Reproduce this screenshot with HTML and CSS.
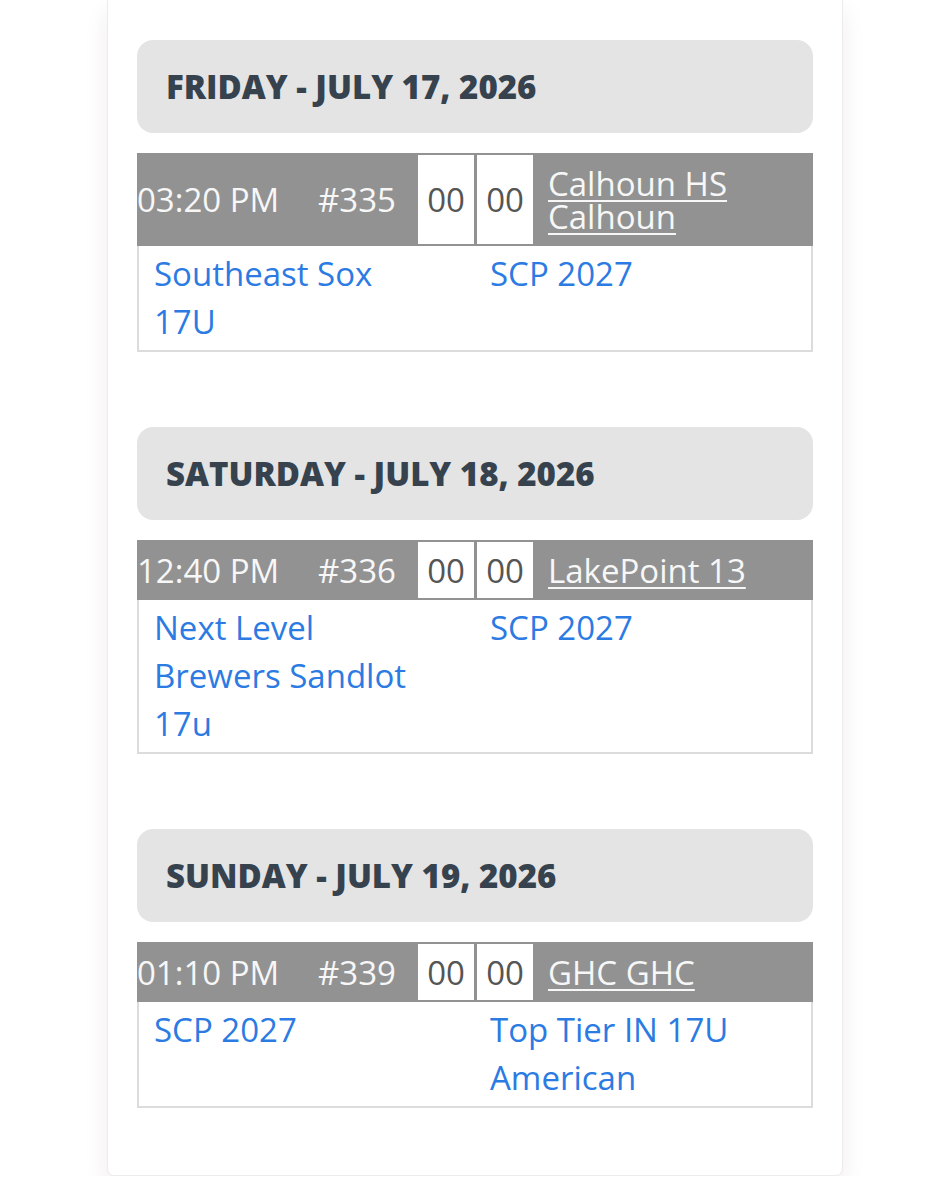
FILE: index.html
```html
<!DOCTYPE html>
<html lang="en">
<head>
    <meta charset="UTF-8">
    <meta name="viewport" content="width=device-width, initial-scale=1.0">
    <title>Schedule</title>
    <link rel="stylesheet" href="styles.css">
</head>
<body>
    <div class="card">

        <div class="day">
            <h2>FRIDAY - JULY 17, 2026</h2>
        </div>
        <div class="game">
            <div class="game-head">
                <div class="time">03:20 PM</div>
                <div class="num">#335</div>
                <div class="score">00</div>
                <div class="score">00</div>
                <div class="field"><a href="#">Calhoun HS Calhoun</a></div>
            </div>
            <div class="game-teams">
                <div class="team"><a href="#">Southeast Sox 17U</a></div>
                <div class="team"><a href="#">SCP 2027</a></div>
            </div>
        </div>

        <div class="day">
            <h2>SATURDAY - JULY 18, 2026</h2>
        </div>
        <div class="game">
            <div class="game-head">
                <div class="time">12:40 PM</div>
                <div class="num">#336</div>
                <div class="score">00</div>
                <div class="score">00</div>
                <div class="field"><a href="#">LakePoint 13</a></div>
            </div>
            <div class="game-teams">
                <div class="team"><a href="#">Next Level Brewers Sandlot 17u</a></div>
                <div class="team"><a href="#">SCP 2027</a></div>
            </div>
        </div>

        <div class="day">
            <h2>SUNDAY - JULY 19, 2026</h2>
        </div>
        <div class="game">
            <div class="game-head">
                <div class="time">01:10 PM</div>
                <div class="num">#339</div>
                <div class="score">00</div>
                <div class="score">00</div>
                <div class="field"><a href="#">GHC GHC</a></div>
            </div>
            <div class="game-teams">
                <div class="team"><a href="#">SCP 2027</a></div>
                <div class="team"><a href="#">Top Tier IN 17U American</a></div>
            </div>
        </div>

    </div>
</body>
</html>
```

FILE: styles.css
```css
body {
    margin: 0;
    background-color: white;
    font-family: "Open Sans", Arial, sans-serif;
}

.card {
    width: 676px;
    margin: 0 auto;
    padding: 40px 29px 67px;
    background-color: white;
    border: 1px solid #ececec;
    border-top: none;
    border-radius: 0 0 7px 7px;
    box-shadow: 0 12px 24px rgba(80, 30, 30, 0.08);
}

.day {
    height: 93px;
    display: flex;
    align-items: center;
    padding: 0 29px;
    background-color: #e4e4e4;
    border-radius: 16px;
    margin-bottom: 20px;
}

.day h2 {
    margin: 0;
    font-size: 33px;
    font-weight: 800;
    color: #36424d;
}

.game {
    border: 2px solid #dcdcdc;
    margin-bottom: 75px;
}

.game:last-child {
    margin-bottom: 0;
}

.game-head {
    display: flex;
    align-items: stretch;
    background-color: #929292;
    margin: -2px -2px 0;
    padding: 2px 0;
    font-size: 33px;
    color: #f7f7f7;
}

.time {
    width: 181px;
    display: flex;
    align-items: center;
    line-height: 33px;
}

.num {
    width: 100px;
    display: flex;
    align-items: center;
    line-height: 33px;
}

.score {
    width: 56px;
    margin-right: 3px;
    display: flex;
    align-items: center;
    justify-content: center;
    background-color: white;
    color: #555;
    font-weight: 500;
}

.field {
    flex: 1;
    padding: 11.5px 20px 11.5px 12px;
    line-height: 33px;
}

.field a {
    color: #f7f7f7;
    text-decoration: underline;
    text-underline-offset: 4px;
    text-decoration-thickness: 2px;
}

.game-teams {
    display: flex;
    padding: 4px 0;
}

.team {
    width: 50%;
    box-sizing: border-box;
    padding: 0 15px;
    font-size: 33px;
    line-height: 48px;
}

.team:first-child {
    padding-right: 60px;
}

.team a {
    color: #2b7be3;
    text-decoration: none;
}
```
